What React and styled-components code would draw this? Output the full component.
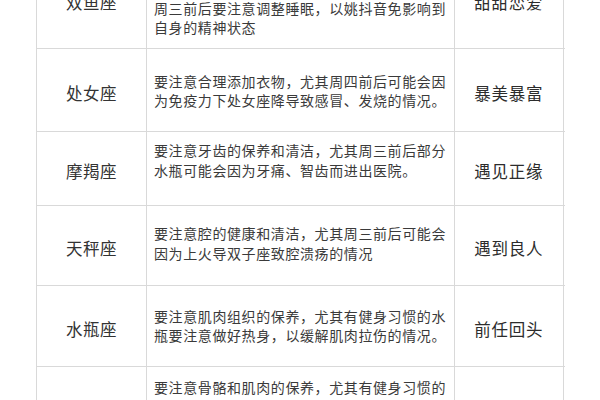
import styled, { createGlobalStyle } from "styled-components";

const GlobalStyle = createGlobalStyle`
  html, body {
    margin: 0;
    padding: 0;
    background: #ffffff;
    overflow: hidden;
  }
  body {
    font-family: "Noto Sans CJK SC", "Noto Sans", sans-serif;
  }
`;

const Page = styled.div`
  width: 600px;
  height: 400px;
  overflow: hidden;
  background: #ffffff;
`;

/* 表格整体，第一行被截掉一半 */
const Table = styled.div`
  margin-top: -49px;
  margin-left: 36px;
  width: 528px;
  border-left: 1.5px solid #d9d9d9;
  display: flex;
  flex-direction: column;
`;

const Row = styled.div`
  display: grid;
  grid-template-columns: 110px 308px 108.5px;
  height: ${({ $h }) => $h}px;
  box-sizing: border-box;
  border-bottom: 1.5px solid #d9d9d9;
`;

const Cell = styled.div`
  box-sizing: border-box;
  border-right: 1.5px solid #d9d9d9;
  display: flex;
  align-items: center;
  justify-content: center;
  color: #333333;
`;

const NameCell = styled(Cell)`
  padding-top: 5px;
  font-size: 16.5px;
  letter-spacing: 0.5px;
  font-weight: 400;
`;

const DescCell = styled(Cell)`
  flex-direction: column;
  align-items: flex-start;
  padding-left: 7px;
  padding-top: ${({ $shift }) => ($shift > 0 ? $shift * 2 : 0)}px;
  padding-bottom: ${({ $shift }) => ($shift < 0 ? -$shift * 2 : 0)}px;
  font-size: 14px;
  letter-spacing: 0.6px;
  line-height: 19.5px;
  color: #3a3a3a;
`;

const Line = styled.span`
  display: block;
  white-space: nowrap;
`;

const LuckCell = styled(Cell)`
  padding-top: 5px;
  font-size: 16.5px;
  letter-spacing: 0.8px;
  font-weight: 400;
  color: #2c2c2c;
`;

const rows = [
  {
    name: "双鱼座",
    lines: [
      "要注意放松心情，避免过度焦虑，尤其是在",
      "周三前后要注意调整睡眠，以姚抖音免影响到",
      "自身的精神状态",
    ],
    luck: "甜甜恋爱",
    h: 98,
    shift: 9,
  },
  {
    name: "处女座",
    lines: [
      "要注意合理添加衣物，尤其周四前后可能会因",
      "为免疫力下处女座降导致感冒、发烧的情况。",
    ],
    luck: "暴美暴富",
    h: 83,
    shift: 1,
  },
  {
    name: "摩羯座",
    lines: [
      "要注意牙齿的保养和清洁，尤其周三前后部分",
      "水瓶可能会因为牙痛、智齿而进出医院。",
    ],
    luck: "遇见正缘",
    h: 74,
    shift: -8,
  },
  {
    name: "天秤座",
    lines: [
      "要注意腔的健康和清洁，尤其周三前后可能会",
      "因为上火导双子座致腔溃疡的情况",
    ],
    luck: "遇到良人",
    h: 80,
    shift: -2,
  },
  {
    name: "水瓶座",
    lines: [
      "要注意肌肉组织的保养，尤其有健身习惯的水",
      "瓶要注意做好热身，以缓解肌肉拉伤的情况。",
    ],
    luck: "前任回头",
    h: 81,
    shift: 0,
  },
  {
    name: "射手座",
    lines: [
      "要注意骨骼和肌肉的保养，尤其有健身习惯的",
      "射手座要注意运动前的热身，避免扭伤和拉",
      "伤的情况。",
    ],
    luck: "事业高升",
    h: 82,
    shift: 0,
  },
];

export default function App() {
  return (
    <Page>
      <GlobalStyle />
      <Table>
        {rows.map((row) => (
          <Row key={row.name} $h={row.h}>
            <NameCell>{row.name}</NameCell>
            <DescCell $shift={row.shift}>
              {row.lines.map((line) => (
                <Line key={line}>{line}</Line>
              ))}
            </DescCell>
            <LuckCell>{row.luck}</LuckCell>
          </Row>
        ))}
      </Table>
    </Page>
  );
}
